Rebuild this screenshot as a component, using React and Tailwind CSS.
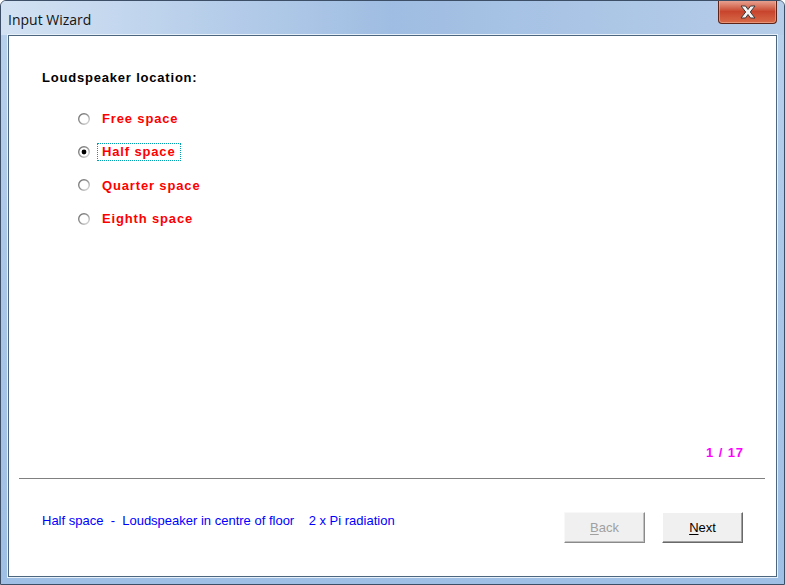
import React, { useState } from 'react';

const options = ['Free space', 'Half space', 'Quarter space', 'Eighth space'];

function Radio({ checked }) {
  return (
    <svg width="12" height="12" viewBox="0 0 12 12" className="shrink-0">
      <defs>
        <linearGradient id="rg" x1="0" y1="0" x2="1" y2="1">
          <stop offset="0" stopColor="#6e6e6e" />
          <stop offset="0.5" stopColor="#949494" />
          <stop offset="1" stopColor="#e4e4e4" />
        </linearGradient>
      </defs>
      <circle cx="6" cy="6" r="5.3" fill="#fff" stroke="url(#rg)" strokeWidth="1.4" />
      {checked && <circle cx="6" cy="6" r="2.4" fill="#000" />}
    </svg>
  );
}

function CloseButton() {
  return (
    <div className="w-[59px] h-[24px] rounded-b-[4px] border border-t-0 border-[#5e2418] bg-gradient-to-b from-[#e8a898] via-[#c8442c] to-[#d86a4a] flex items-center justify-center shadow-[inset_0_0_0_1px_rgba(255,200,180,0.45)]">
      <svg width="20" height="16" viewBox="0 0 20 16">
        <path
          d="M3 2 H7.5 L10 5.5 L12.5 2 H17 L12.3 8 L17 14 H12.5 L10 10.5 L7.5 14 H3 L7.7 8 Z"
          fill="#f4f4f4"
          stroke="#3a3a3a"
          strokeWidth="1"
          strokeLinejoin="round"
        />
      </svg>
    </div>
  );
}

export default function App() {
  const [selected, setSelected] = useState(1);

  return (
    <div className="w-[785px] h-[585px] flex flex-col bg-gradient-to-b from-[#b9d1ec] via-[#a9c6e8] to-[#9fbfe4] border border-[#3c4f66] rounded-t-[6px] overflow-hidden font-['Liberation_Sans',Arial,sans-serif]">
      {/* title bar */}
      <div className="h-[34px] shrink-0 flex items-start justify-between bg-gradient-to-r from-[#d3e2f3] via-[#9fbde2] to-[#b6cde9]">
        <div className="pl-[7px] pt-[10px] text-[14px] leading-[18px] text-[#141414] font-['Open_Sans','Noto_Sans',sans-serif]">
          Input Wizard
        </div>
        <div className="mr-[7px] -mt-px">
          <CloseButton />
        </div>
      </div>

      {/* client area */}
      <div className="flex-1 mx-[7px] mb-[7px] border border-[#4d6680] bg-white flex flex-col shadow-[0_0_0_1px_#e8f0fa]">
        <div className="pl-[33px] mt-[34px] text-[13px] leading-[15px] font-bold tracking-[0.8px] text-black">
          Loudspeaker location:
        </div>

        <div className="mt-[17px] flex flex-col">
          {options.map((opt, i) => (
            <div
              key={opt}
              className="h-[33.4px] flex items-center pl-[69px] cursor-default"
              onClick={() => setSelected(i)}
            >
              <Radio checked={selected === i} />
              <span
                className={
                  'ml-[7px] h-[18px] px-[4px] flex items-center text-[13px] font-bold tracking-[0.85px] text-[#ff0000] border border-dotted ' +
                  (selected === i ? 'border-[#00a0b0]' : 'border-transparent')
                }
              >
                {opt}
              </span>
            </div>
          ))}
        </div>

        <div className="flex-1" />

        <div className="pr-[32px] text-right text-[13px] leading-[15px] font-bold tracking-[0.9px] text-[#ff00ff]">
          1 / 17
        </div>

        <div className="mt-[18px] ml-[10px] mr-[11px] h-px bg-[#808080]" />

        <div className="mt-[33px] mb-[33px] pr-[33px] flex items-start justify-between">
          <div className="pl-[33px] pt-[1px] text-[13px] leading-[15px] text-[#0000ff] whitespace-pre">
            {'Half space  -  Loudspeaker in centre of floor    2 x Pi radiation'}
          </div>
          <div className="flex gap-[17px]">
            <button
              disabled
              className="w-[81px] h-[31px] bg-[#f0f0f0] border border-t-[#f8f8f8] border-l-[#f8f8f8] border-r-[#8a8a8a] border-b-[#8a8a8a] shadow-[inset_-1px_-1px_0_#c0c0c0] text-[13px] text-[#a0a0a0]"
            >
              <span className="underline underline-offset-2">B</span>ack
            </button>
            <button className="w-[81px] h-[31px] bg-[#f0f0f0] border border-t-[#ffffff] border-l-[#ffffff] border-r-[#696969] border-b-[#696969] shadow-[inset_-1px_-1px_0_#a0a0a0] text-[13px] text-black">
              <span className="underline underline-offset-2">N</span>ext
            </button>
          </div>
        </div>
      </div>
    </div>
  );
}
